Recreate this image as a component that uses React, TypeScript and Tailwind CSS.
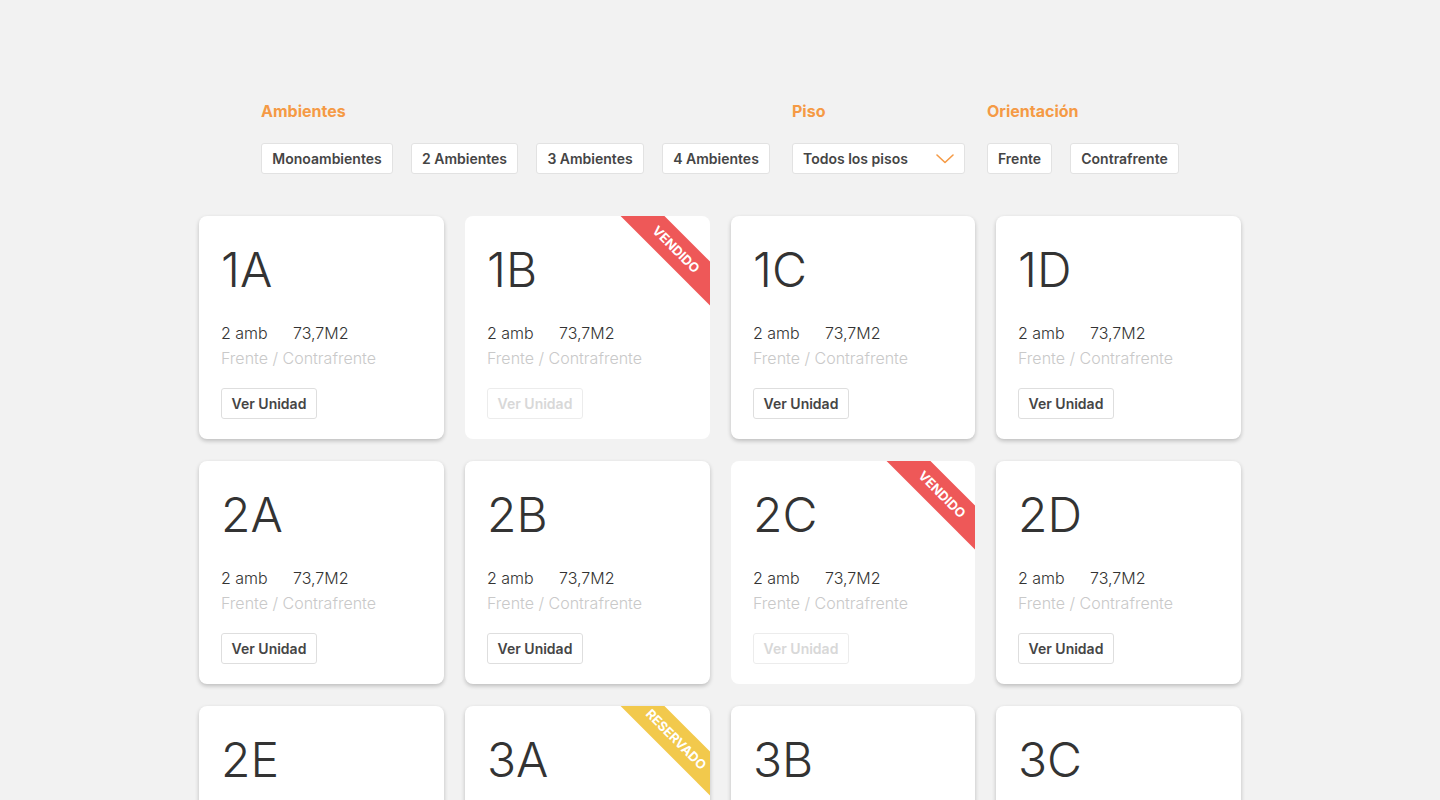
import React from 'react'

type Status = 'vendido' | 'reservado' | null

interface Unit {
  name: string
  status: Status
}

const units: Unit[] = [
  { name: '1A', status: null },
  { name: '1B', status: 'vendido' },
  { name: '1C', status: null },
  { name: '1D', status: null },
  { name: '2A', status: null },
  { name: '2B', status: null },
  { name: '2C', status: 'vendido' },
  { name: '2D', status: null },
  { name: '2E', status: null },
  { name: '3A', status: 'reservado' },
  { name: '3B', status: null },
  { name: '3C', status: null },
]

const ambientes = [
  { label: 'Monoambientes', w: 'w-[132px]' },
  { label: '2 Ambientes', w: 'w-[107px]' },
  { label: '3 Ambientes', w: 'w-[108px]' },
  { label: '4 Ambientes', w: 'w-[108px]' },
]

function FilterButton({ label, className }: { label: string; className: string }) {
  return (
    <button
      className={`${className} h-[31px] rounded-[3px] border border-[#e2e2e2] bg-white text-[14px] font-semibold text-[#454545] flex items-center justify-center`}
    >
      {label}
    </button>
  )
}

function Ribbon({ status }: { status: Exclude<Status, null> }) {
  const color = status === 'vendido' ? 'bg-[#ee5858]' : 'bg-[#f2c94c]'
  return (
    <div
      className={`absolute left-[131px] top-[18px] w-[160px] h-[31px] rotate-45 ${color} flex items-center justify-center text-[13px] font-bold uppercase text-white`}
    >
      {status}
    </div>
  )
}

function UnitCard({ unit }: { unit: Unit }) {
  const sold = unit.status === 'vendido'
  return (
    <div
      className={`relative overflow-hidden rounded-[8px] bg-white h-[223px] pl-[22px] pt-[30px] ${
        sold ? '' : 'shadow-[0_2px_4px_rgba(0,0,0,0.22)]'
      }`}
    >
      {unit.status && <Ribbon status={unit.status} />}
      <div className="text-[48px] leading-[48px] font-light text-[#333]">{unit.name}</div>
      <div className="mt-[27px] flex text-[16px] leading-[25px] font-light text-[#333]">
        <span className="w-[72px]">2 amb</span>
        <span>73,7M2</span>
      </div>
      <div className="text-[16px] leading-[25px] font-light text-[#c9c9c9]">Frente / Contrafrente</div>
      <button
        className={`mt-[17px] h-[31px] w-[96px] rounded-[3px] border bg-white text-[14px] font-semibold ${
          sold ? 'border-[#ececec] text-[#d8d8d8]' : 'border-[#dedede] text-[#454545]'
        }`}
      >
        Ver Unidad
      </button>
    </div>
  )
}

export default function App() {
  return (
    <div className="min-h-screen bg-[#f2f2f2] pt-[99px] font-['Inter','Liberation_Sans',sans-serif]">
      <div className="flex justify-center gap-[22px]">
        <div>
          <h2 className="mb-5 text-[16px] leading-6 font-bold text-[#f59a45]">Ambientes</h2>
          <div className="flex gap-[18px]">
            {ambientes.map((a) => (
              <FilterButton key={a.label} label={a.label} className={a.w} />
            ))}
          </div>
        </div>
        <div>
          <h2 className="mb-5 text-[16px] leading-6 font-bold text-[#f59a45]">Piso</h2>
          <button className="flex h-[31px] w-[173px] items-center justify-between rounded-[3px] border border-[#e2e2e2] bg-white pl-[10px] pr-[10px] text-[14px] font-semibold text-[#454545]">
            Todos los pisos
            <svg width="18" height="10" viewBox="0 0 18 10" fill="none">
              <path d="M1 1l8 7.5L17 1" stroke="#f59a45" strokeWidth="1.6" strokeLinecap="round" strokeLinejoin="round" />
            </svg>
          </button>
        </div>
        <div>
          <h2 className="mb-5 text-[16px] leading-6 font-bold text-[#f59a45]">Orientación</h2>
          <div className="flex gap-[18px]">
            <FilterButton label="Frente" className="w-[65px]" />
            <FilterButton label="Contrafrente" className="w-[109px]" />
          </div>
        </div>
      </div>

      <div className="mt-[42px] grid grid-cols-[245px_245px_244px_245px] justify-center gap-x-[21px] gap-y-[22px] pb-10">
        {units.map((u) => (
          <UnitCard key={u.name} unit={u} />
        ))}
      </div>
    </div>
  )
}
